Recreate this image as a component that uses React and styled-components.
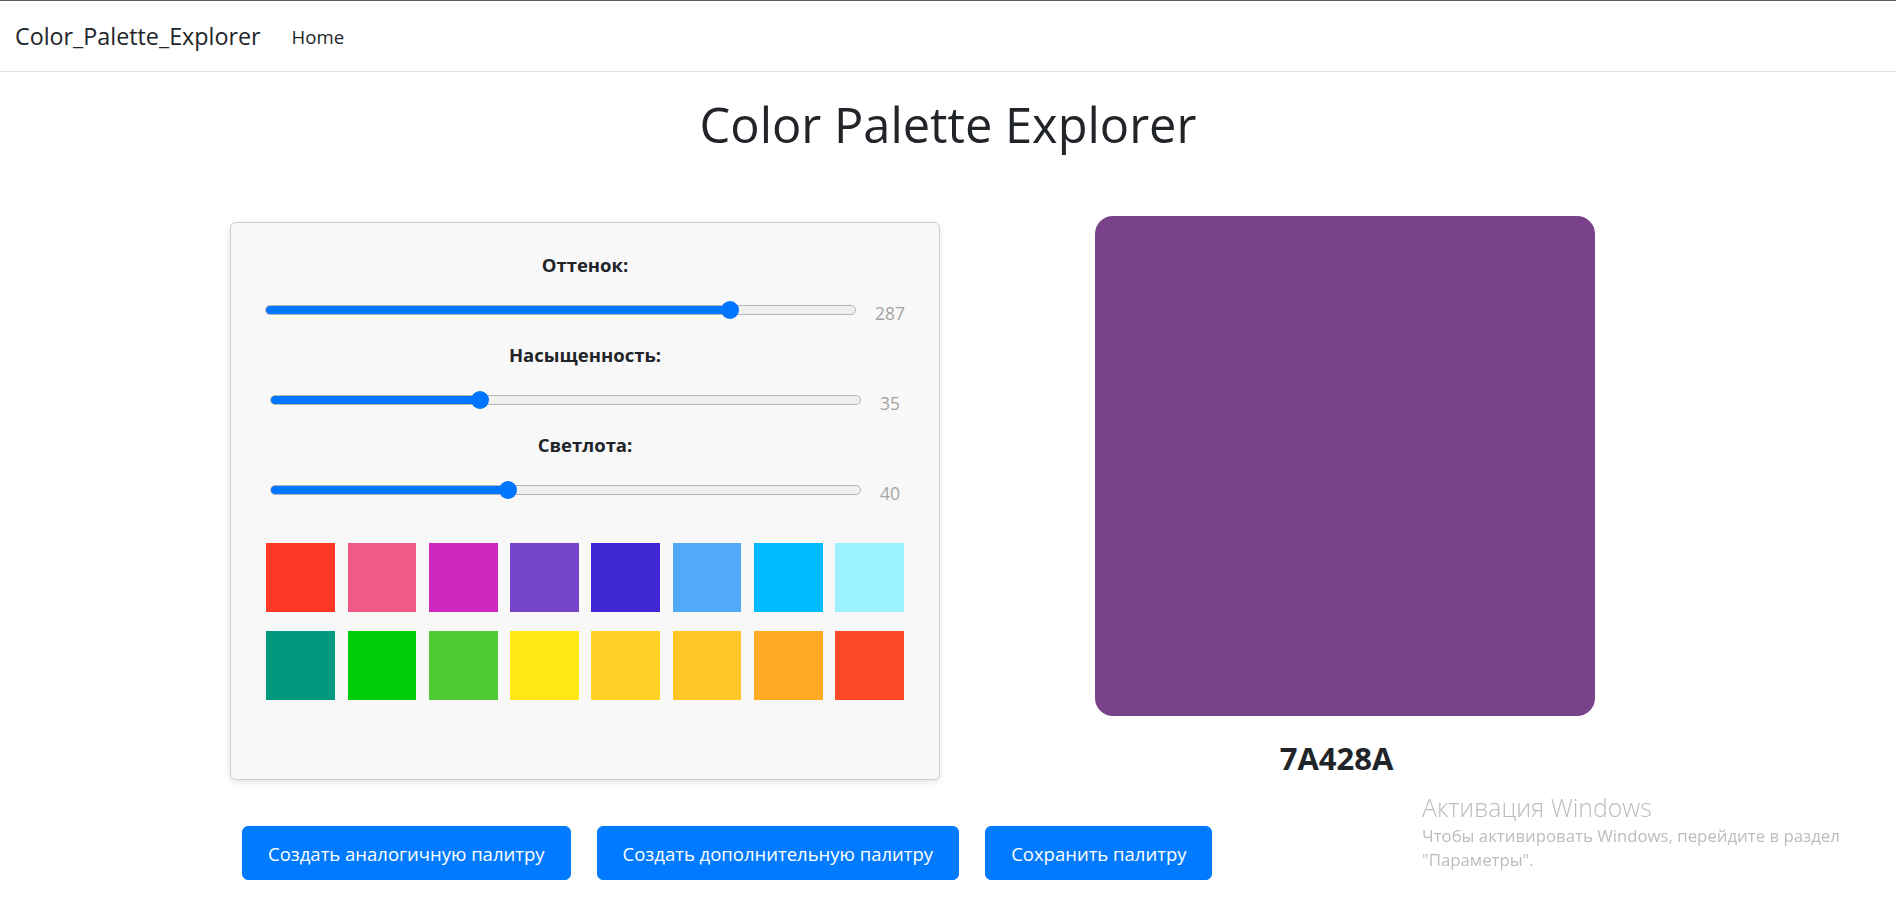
import React, { useState } from 'react';
import styled, { createGlobalStyle } from 'styled-components';

const GlobalStyle = createGlobalStyle`
	body {
		margin: 0;
		background: #fff;
		font-family: 'Open Sans', 'Noto Sans', sans-serif;
		font-size: 18px;
		color: #212529;
	}
`;

const Navbar = styled.nav`
	display: flex;
	align-items: center;
	height: 70px;
	padding: 0 15px;
	border-top: 1px solid #5a5a5a;
	border-bottom: 1px solid #dfdfdf;
`;
const Brand = styled.a`
	font-size: 23.3px;
	color: #212529;
	margin-right: 31px;
`;
const NavLink = styled.a`
	font-size: 18.6px;
	color: #212529;
`;
const Title = styled.h1`
	margin: 22px 0 0;
	text-align: center;
	font-size: 48.8px;
	font-weight: 500;
	line-height: 60px;
	color: #212529;
`;
const Main = styled.div`
	display: flex;
	align-items: flex-start;
	gap: 155px;
	padding-left: 230px;
	margin-top: 62px;
`;
const Card = styled.div`
	box-sizing: border-box;
	width: 710px;
	margin-top: 6px;
	padding: 27px 25px 79px;
	background: #f8f8f8;
	border: 1px solid #cfcfcf;
	border-radius: 6px;
	box-shadow: 0 2px 6px rgba(0, 0, 0, 0.12);
	display: flex;
	flex-direction: column;
	align-items: center;
	gap: 15px;
`;
const Label = styled.label`
	font-weight: 700;
	font-size: 18.5px;
	line-height: 30px;
`;
const SliderRow = styled.div`
	display: flex;
	align-items: center;
	gap: 19px;
	height: 30px;
`;
const Range = styled.input`
	-webkit-appearance: none;
	appearance: none;
	width: 591px;
	height: 10px;
	margin: 0;
	border-radius: 5px;
	border: 1px solid #b4b4b4;
	box-sizing: border-box;
	outline: none;
	&::-webkit-slider-thumb {
		-webkit-appearance: none;
		width: 18px;
		height: 18px;
		border-radius: 50%;
		background: #0075ff;
		border: none;
	}
`;
const Value = styled.span`
	color: #a3a3a3;
	font-size: 17.5px;
	padding-top: 5px;
`;
const Swatches = styled.div`
	display: grid;
	grid-template-columns: repeat(8, 68.75px);
	column-gap: 12.5px;
	row-gap: 19px;
	margin-top: 23px;
`;
const Swatch = styled.div`
	height: 69px;
	background: ${(p) => p.color};
`;
const PreviewCol = styled.div`
	width: 500px;
	display: flex;
	flex-direction: column;
	align-items: center;
`;
const Preview = styled.div`
	width: 500px;
	height: 500px;
	border-radius: 18px;
	background: ${(p) => p.color};
`;
const Hex = styled.h3`
	margin: 21px 17px 0 0;
	font-size: 31px;
	font-weight: 700;
	line-height: 42px;
`;
const Buttons = styled.div`
	display: flex;
	gap: 26px;
	padding-left: 242px;
	margin-top: 46px;
`;
const Button = styled.button`
	box-sizing: border-box;
	height: 54px;
	padding: 0 25px;
	font-family: inherit;
	font-size: 18.5px;
	color: #fff;
	background: #007bff;
	border: 1px solid #007bff;
	border-radius: 6px;
`;
const Watermark = styled.div`
	position: fixed;
	left: 1422px;
	top: 790px;
	color: rgba(160, 160, 160, 0.7);
	pointer-events: none;
`;
const WmTitle = styled.div`
	font-size: 24.8px;
	font-weight: 300;
	line-height: 34px;
`;
const WmText = styled.div`
	font-size: 16.8px;
	line-height: 24px;
`;

const palette = [
	'#ff3725', '#ef5a87', '#d026c0', '#7744cc', '#4027d4', '#51aaf7', '#00bbff', '#9cf1fe',
	'#00997d', '#00cc0a', '#51cb33', '#ffe813', '#ffd228', '#ffc628', '#ffaa22', '#ff4a27',
];

const Slider = ({ label, value, max, onChange }) => {
	const f = value / max;
	const stop = ((9 + 573 * f) / 591) * 100;
	return (
		<>
			<Label>{label}</Label>
			<SliderRow>
				<Range
					type="range"
					min="0"
					max={max}
					value={value}
					onChange={(e) => onChange(+e.target.value)}
					style={{ background: `linear-gradient(to right, #0075ff ${stop}%, #efefef ${stop}%)` }}
				/>
				<Value>{value}</Value>
			</SliderRow>
		</>
	);
};

export default function App() {
	const [hue, setHue] = useState(287);
	const [sat, setSat] = useState(35);
	const [light, setLight] = useState(40);
	return (
		<>
			<GlobalStyle />
			<Navbar>
				<Brand>Color_Palette_Explorer</Brand>
				<NavLink>Home</NavLink>
			</Navbar>
			<Title>Color Palette Explorer</Title>
			<Main>
				<Card>
					<Slider label="Оттенок:" value={hue} max={360} onChange={setHue} />
					<Slider label="Насыщенность:" value={sat} max={100} onChange={setSat} />
					<Slider label="Светлота:" value={light} max={100} onChange={setLight} />
					<Swatches>
						{palette.map((c) => (
							<Swatch key={c} color={c} />
						))}
					</Swatches>
				</Card>
				<PreviewCol>
					<Preview color="#7A428A" />
					<Hex>7A428A</Hex>
				</PreviewCol>
			</Main>
			<Buttons>
				<Button>Создать аналогичную палитру</Button>
				<Button>Создать дополнительную палитру</Button>
				<Button>Сохранить палитру</Button>
			</Buttons>
			<Watermark>
				<WmTitle>Активация Windows</WmTitle>
				<WmText>Чтобы активировать Windows, перейдите в раздел</WmText>
				<WmText>"Параметры".</WmText>
			</Watermark>
		</>
	);
}
